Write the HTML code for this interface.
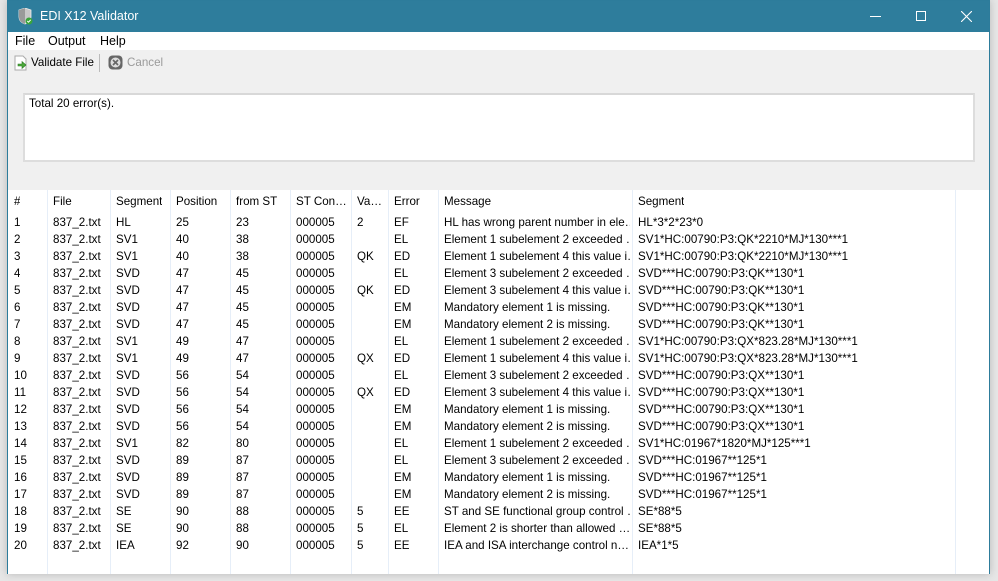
<!DOCTYPE html>
<html><head><meta charset="utf-8"><style>
*{margin:0;padding:0;box-sizing:border-box}
body{width:998px;height:581px;background:#e6e6e6;font-family:"Liberation Sans",sans-serif;font-size:11.6px;color:#000;position:relative;overflow:hidden}
#win{position:absolute;left:7px;top:0;width:983px;height:574px;background:#f0f0f0;border:1px solid #2d7c9b;box-shadow:0 0 8px rgba(0,0,0,.2)}
#title{position:absolute;left:0;top:0;width:981px;height:31px;background:#2e7d9c;color:#fff;font-size:12.5px}
#menu{position:absolute;left:0;top:31px;width:981px;height:18px;background:#fff}
#menu span{position:absolute;top:2px;font-size:12.5px}
#txt{position:absolute;left:15px;top:92px;width:952px;height:69px;background:#fff;border:2px solid #ddd;border-top-color:#d8d8d8}
#grid{position:absolute;left:0;top:189px;width:981px;height:384px;background:#fff}
.vl{position:absolute;top:0;width:1px;height:384px;background:#e6eef8}
.c{position:absolute;white-space:nowrap;line-height:17px;overflow:hidden}
#body span:nth-child(9){max-width:186px}
</style></head><body>
<div id="win">
 <div id="title">
  <svg style="position:absolute;left:9px;top:7px" width="16" height="17" viewBox="0 0 16 17"><path d="M2 2 L8 0 L14 2 L14 9 Q14 14 8 16 Q2 14 2 9Z" fill="#c8c8c8" stroke="#eee" stroke-width=".8"/><path d="M8 0 L8 16 Q2 14 2 9 L2 2Z" fill="#9a9a9a"/><circle cx="12" cy="13" r="3.5" fill="#3aa53a"/><path d="M10.3 13 l1.2 1.2 2.2-2.4" stroke="#fff" fill="none" stroke-width="1"/></svg>
  <span style="position:absolute;left:32px;top:8px">EDI X12 Validator</span>
  <div style="position:absolute;left:862px;top:15px;width:11px;height:1px;background:#fff"></div>
  <div style="position:absolute;left:908px;top:10px;width:10px;height:10px;border:1px solid #fff"></div>
  <svg style="position:absolute;left:953px;top:10px" width="11" height="11"><path d="M0 0L11 11M11 0L0 11" stroke="#fff" stroke-width="1.1"/></svg>
 </div>
 <div id="menu"><span style="left:7px">File</span><span style="left:40px">Output</span><span style="left:92px">Help</span></div>
 <svg style="position:absolute;left:5px;top:54px" width="16" height="16" viewBox="0 0 16 16"><path d="M2 1h8l3 3v11H2z" fill="#fff" stroke="#aaa"/><path d="M5 9h4V6.5l4 3.5-4 3.5V11H5z" fill="#4caa3a" stroke="#2d7a25" stroke-width=".6"/></svg>
 <span style="position:absolute;left:23px;top:55px">Validate File</span>
 <div style="position:absolute;left:91px;top:53px;width:1px;height:18px;background:#bbb"></div>
 <svg style="position:absolute;left:100px;top:54px" width="15" height="15" viewBox="0 0 15 15"><rect x=".5" y=".5" width="14" height="14" rx="4" fill="#666"/><circle cx="7.5" cy="7.5" r="5" fill="#ddd"/><path d="M5 5l5 5M10 5l-5 5" stroke="#666" stroke-width="1.6"/></svg>
 <span style="position:absolute;left:119px;top:55px;color:#9a9a9a">Cancel</span>
 <div id="txt"><span style="position:absolute;left:4px;top:2px">Total 20 error(s).</span></div>
 <div id="grid">
  <div class="vl" style="left:39px"></div><div class="vl" style="left:102px"></div><div class="vl" style="left:162px"></div><div class="vl" style="left:222px"></div><div class="vl" style="left:282px"></div><div class="vl" style="left:343px"></div><div class="vl" style="left:380px"></div><div class="vl" style="left:430px"></div><div class="vl" style="left:624px"></div><div class="vl" style="left:947px"></div>
 </div>
</div>
<div id="host" style="position:absolute;left:8px;top:189px">
<div class="c" style="left:6px;top:4px">#</div><div class="c" style="left:45px;top:4px">File</div><div class="c" style="left:108px;top:4px">Segment</div><div class="c" style="left:168px;top:4px">Position</div><div class="c" style="left:228px;top:4px">from ST</div><div class="c" style="left:288px;top:4px">ST Con…</div><div class="c" style="left:349px;top:4px">Va…</div><div class="c" style="left:386px;top:4px">Error</div><div class="c" style="left:436px;top:4px">Message</div><div class="c" style="left:630px;top:4px">Segment</div>
</div>
<div id="body" style="position:absolute;left:8px;top:214px">
<div style="position:relative;height:17px"><span class="c" style="left:6px">1</span><span class="c" style="left:45px">837_2.txt</span><span class="c" style="left:108px">HL</span><span class="c" style="left:168px">25</span><span class="c" style="left:228px">23</span><span class="c" style="left:288px">000005</span><span class="c" style="left:349px">2</span><span class="c" style="left:386px">EF</span><span class="c" style="left:436px">HL has wrong parent number in ele…</span><span class="c" style="left:630px">HL*3*2*23*0</span></div>
<div style="position:relative;height:17px"><span class="c" style="left:6px">2</span><span class="c" style="left:45px">837_2.txt</span><span class="c" style="left:108px">SV1</span><span class="c" style="left:168px">40</span><span class="c" style="left:228px">38</span><span class="c" style="left:288px">000005</span><span class="c" style="left:349px"></span><span class="c" style="left:386px">EL</span><span class="c" style="left:436px">Element 1 subelement 2 exceeded …</span><span class="c" style="left:630px">SV1*HC:00790:P3:QK*2210*MJ*130***1</span></div>
<div style="position:relative;height:17px"><span class="c" style="left:6px">3</span><span class="c" style="left:45px">837_2.txt</span><span class="c" style="left:108px">SV1</span><span class="c" style="left:168px">40</span><span class="c" style="left:228px">38</span><span class="c" style="left:288px">000005</span><span class="c" style="left:349px">QK</span><span class="c" style="left:386px">ED</span><span class="c" style="left:436px">Element 1 subelement 4 this value i…</span><span class="c" style="left:630px">SV1*HC:00790:P3:QK*2210*MJ*130***1</span></div>
<div style="position:relative;height:17px"><span class="c" style="left:6px">4</span><span class="c" style="left:45px">837_2.txt</span><span class="c" style="left:108px">SVD</span><span class="c" style="left:168px">47</span><span class="c" style="left:228px">45</span><span class="c" style="left:288px">000005</span><span class="c" style="left:349px"></span><span class="c" style="left:386px">EL</span><span class="c" style="left:436px">Element 3 subelement 2 exceeded …</span><span class="c" style="left:630px">SVD***HC:00790:P3:QK**130*1</span></div>
<div style="position:relative;height:17px"><span class="c" style="left:6px">5</span><span class="c" style="left:45px">837_2.txt</span><span class="c" style="left:108px">SVD</span><span class="c" style="left:168px">47</span><span class="c" style="left:228px">45</span><span class="c" style="left:288px">000005</span><span class="c" style="left:349px">QK</span><span class="c" style="left:386px">ED</span><span class="c" style="left:436px">Element 3 subelement 4 this value i…</span><span class="c" style="left:630px">SVD***HC:00790:P3:QK**130*1</span></div>
<div style="position:relative;height:17px"><span class="c" style="left:6px">6</span><span class="c" style="left:45px">837_2.txt</span><span class="c" style="left:108px">SVD</span><span class="c" style="left:168px">47</span><span class="c" style="left:228px">45</span><span class="c" style="left:288px">000005</span><span class="c" style="left:349px"></span><span class="c" style="left:386px">EM</span><span class="c" style="left:436px">Mandatory element 1 is missing.</span><span class="c" style="left:630px">SVD***HC:00790:P3:QK**130*1</span></div>
<div style="position:relative;height:17px"><span class="c" style="left:6px">7</span><span class="c" style="left:45px">837_2.txt</span><span class="c" style="left:108px">SVD</span><span class="c" style="left:168px">47</span><span class="c" style="left:228px">45</span><span class="c" style="left:288px">000005</span><span class="c" style="left:349px"></span><span class="c" style="left:386px">EM</span><span class="c" style="left:436px">Mandatory element 2 is missing.</span><span class="c" style="left:630px">SVD***HC:00790:P3:QK**130*1</span></div>
<div style="position:relative;height:17px"><span class="c" style="left:6px">8</span><span class="c" style="left:45px">837_2.txt</span><span class="c" style="left:108px">SV1</span><span class="c" style="left:168px">49</span><span class="c" style="left:228px">47</span><span class="c" style="left:288px">000005</span><span class="c" style="left:349px"></span><span class="c" style="left:386px">EL</span><span class="c" style="left:436px">Element 1 subelement 2 exceeded …</span><span class="c" style="left:630px">SV1*HC:00790:P3:QX*823.28*MJ*130***1</span></div>
<div style="position:relative;height:17px"><span class="c" style="left:6px">9</span><span class="c" style="left:45px">837_2.txt</span><span class="c" style="left:108px">SV1</span><span class="c" style="left:168px">49</span><span class="c" style="left:228px">47</span><span class="c" style="left:288px">000005</span><span class="c" style="left:349px">QX</span><span class="c" style="left:386px">ED</span><span class="c" style="left:436px">Element 1 subelement 4 this value i…</span><span class="c" style="left:630px">SV1*HC:00790:P3:QX*823.28*MJ*130***1</span></div>
<div style="position:relative;height:17px"><span class="c" style="left:6px">10</span><span class="c" style="left:45px">837_2.txt</span><span class="c" style="left:108px">SVD</span><span class="c" style="left:168px">56</span><span class="c" style="left:228px">54</span><span class="c" style="left:288px">000005</span><span class="c" style="left:349px"></span><span class="c" style="left:386px">EL</span><span class="c" style="left:436px">Element 3 subelement 2 exceeded …</span><span class="c" style="left:630px">SVD***HC:00790:P3:QX**130*1</span></div>
<div style="position:relative;height:17px"><span class="c" style="left:6px">11</span><span class="c" style="left:45px">837_2.txt</span><span class="c" style="left:108px">SVD</span><span class="c" style="left:168px">56</span><span class="c" style="left:228px">54</span><span class="c" style="left:288px">000005</span><span class="c" style="left:349px">QX</span><span class="c" style="left:386px">ED</span><span class="c" style="left:436px">Element 3 subelement 4 this value i…</span><span class="c" style="left:630px">SVD***HC:00790:P3:QX**130*1</span></div>
<div style="position:relative;height:17px"><span class="c" style="left:6px">12</span><span class="c" style="left:45px">837_2.txt</span><span class="c" style="left:108px">SVD</span><span class="c" style="left:168px">56</span><span class="c" style="left:228px">54</span><span class="c" style="left:288px">000005</span><span class="c" style="left:349px"></span><span class="c" style="left:386px">EM</span><span class="c" style="left:436px">Mandatory element 1 is missing.</span><span class="c" style="left:630px">SVD***HC:00790:P3:QX**130*1</span></div>
<div style="position:relative;height:17px"><span class="c" style="left:6px">13</span><span class="c" style="left:45px">837_2.txt</span><span class="c" style="left:108px">SVD</span><span class="c" style="left:168px">56</span><span class="c" style="left:228px">54</span><span class="c" style="left:288px">000005</span><span class="c" style="left:349px"></span><span class="c" style="left:386px">EM</span><span class="c" style="left:436px">Mandatory element 2 is missing.</span><span class="c" style="left:630px">SVD***HC:00790:P3:QX**130*1</span></div>
<div style="position:relative;height:17px"><span class="c" style="left:6px">14</span><span class="c" style="left:45px">837_2.txt</span><span class="c" style="left:108px">SV1</span><span class="c" style="left:168px">82</span><span class="c" style="left:228px">80</span><span class="c" style="left:288px">000005</span><span class="c" style="left:349px"></span><span class="c" style="left:386px">EL</span><span class="c" style="left:436px">Element 1 subelement 2 exceeded …</span><span class="c" style="left:630px">SV1*HC:01967*1820*MJ*125***1</span></div>
<div style="position:relative;height:17px"><span class="c" style="left:6px">15</span><span class="c" style="left:45px">837_2.txt</span><span class="c" style="left:108px">SVD</span><span class="c" style="left:168px">89</span><span class="c" style="left:228px">87</span><span class="c" style="left:288px">000005</span><span class="c" style="left:349px"></span><span class="c" style="left:386px">EL</span><span class="c" style="left:436px">Element 3 subelement 2 exceeded …</span><span class="c" style="left:630px">SVD***HC:01967**125*1</span></div>
<div style="position:relative;height:17px"><span class="c" style="left:6px">16</span><span class="c" style="left:45px">837_2.txt</span><span class="c" style="left:108px">SVD</span><span class="c" style="left:168px">89</span><span class="c" style="left:228px">87</span><span class="c" style="left:288px">000005</span><span class="c" style="left:349px"></span><span class="c" style="left:386px">EM</span><span class="c" style="left:436px">Mandatory element 1 is missing.</span><span class="c" style="left:630px">SVD***HC:01967**125*1</span></div>
<div style="position:relative;height:17px"><span class="c" style="left:6px">17</span><span class="c" style="left:45px">837_2.txt</span><span class="c" style="left:108px">SVD</span><span class="c" style="left:168px">89</span><span class="c" style="left:228px">87</span><span class="c" style="left:288px">000005</span><span class="c" style="left:349px"></span><span class="c" style="left:386px">EM</span><span class="c" style="left:436px">Mandatory element 2 is missing.</span><span class="c" style="left:630px">SVD***HC:01967**125*1</span></div>
<div style="position:relative;height:17px"><span class="c" style="left:6px">18</span><span class="c" style="left:45px">837_2.txt</span><span class="c" style="left:108px">SE</span><span class="c" style="left:168px">90</span><span class="c" style="left:228px">88</span><span class="c" style="left:288px">000005</span><span class="c" style="left:349px">5</span><span class="c" style="left:386px">EE</span><span class="c" style="left:436px">ST and SE functional group control …</span><span class="c" style="left:630px">SE*88*5</span></div>
<div style="position:relative;height:17px"><span class="c" style="left:6px">19</span><span class="c" style="left:45px">837_2.txt</span><span class="c" style="left:108px">SE</span><span class="c" style="left:168px">90</span><span class="c" style="left:228px">88</span><span class="c" style="left:288px">000005</span><span class="c" style="left:349px">5</span><span class="c" style="left:386px">EL</span><span class="c" style="left:436px">Element 2 is shorter than allowed …</span><span class="c" style="left:630px">SE*88*5</span></div>
<div style="position:relative;height:17px"><span class="c" style="left:6px">20</span><span class="c" style="left:45px">837_2.txt</span><span class="c" style="left:108px">IEA</span><span class="c" style="left:168px">92</span><span class="c" style="left:228px">90</span><span class="c" style="left:288px">000005</span><span class="c" style="left:349px">5</span><span class="c" style="left:386px">EE</span><span class="c" style="left:436px">IEA and ISA interchange control n…</span><span class="c" style="left:630px">IEA*1*5</span></div>
</div>
</body></html>
